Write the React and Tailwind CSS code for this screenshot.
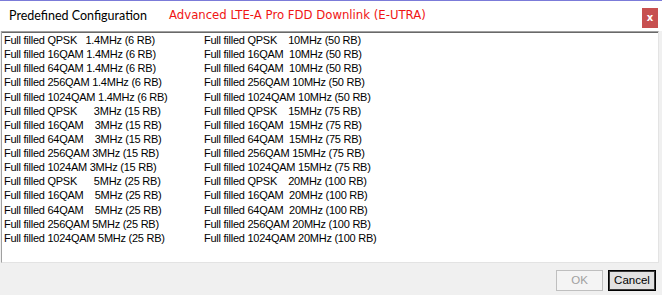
import React from 'react'

const left = [
    'Full filled QPSK   1.4MHz (6 RB)',
    'Full filled 16QAM 1.4MHz (6 RB)',
    'Full filled 64QAM 1.4MHz (6 RB)',
    'Full filled 256QAM 1.4MHz (6 RB)',
    'Full filled 1024QAM 1.4MHz (6 RB)',
    'Full filled QPSK      3MHz (15 RB)',
    'Full filled 16QAM    3MHz (15 RB)',
    'Full filled 64QAM    3MHz (15 RB)',
    'Full filled 256QAM 3MHz (15 RB)',
    'Full filled 1024AM 3MHz (15 RB)',
    'Full filled QPSK      5MHz (25 RB)',
    'Full filled 16QAM    5MHz (25 RB)',
    'Full filled 64QAM    5MHz (25 RB)',
    'Full filled 256QAM 5MHz (25 RB)',
    'Full filled 1024QAM 5MHz (25 RB)',
]

const right = [
    'Full filled QPSK    10MHz (50 RB)',
    'Full filled 16QAM  10MHz (50 RB)',
    'Full filled 64QAM  10MHz (50 RB)',
    'Full filled 256QAM 10MHz (50 RB)',
    'Full filled 1024QAM 10MHz (50 RB)',
    'Full filled QPSK    15MHz (75 RB)',
    'Full filled 16QAM  15MHz (75 RB)',
    'Full filled 64QAM  15MHz (75 RB)',
    'Full filled 256QAM 15MHz (75 RB)',
    'Full filled 1024QAM 15MHz (75 RB)',
    'Full filled QPSK    20MHz (100 RB)',
    'Full filled 16QAM  20MHz (100 RB)',
    'Full filled 64QAM  20MHz (100 RB)',
    'Full filled 256QAM 20MHz (100 RB)',
    'Full filled 1024QAM 20MHz (100 RB)',
]

const Column = ({ items }) => (
    <div className="flex flex-col w-[200px]">
        {items.map((t, i) => (
            <div key={i} className="h-[14.14px] leading-[14px] whitespace-pre">{t}</div>
        ))}
    </div>
)

const App = () => {
    return (
        <div className="w-[662px] h-[295px] flex flex-col bg-[#f0f0f0] border-t border-[#7b7bd9] overflow-hidden">
            {/* title bar */}
            <div className="h-[30px] bg-white flex items-center shrink-0">
                <span className="ml-[9px] w-[160px] text-[12.5px] text-black font-['Lato',sans-serif]">Predefined Configuration</span>
                <span className="text-[11.7px] text-[#f01414] font-['DejaVu_Sans',sans-serif]">Advanced LTE-A Pro FDD Downlink (E-UTRA)</span>
                <div className="ml-auto mr-[4px] mt-[3px] w-[16px] h-[20px] bg-[#c75050] flex items-center justify-center text-white text-[10px] font-bold font-['DejaVu_Sans',sans-serif] leading-none">x</div>
            </div>

            {/* list box */}
            <div className="ml-[1px] mr-[3px] h-[232px] bg-white border-t border-l border-[#a0a0a0] border-r border-b border-r-[#e3e3e3] border-b-[#e3e3e3] shrink-0">
                <div className="h-full border-t border-[#696969] flex pl-[2px] text-[11px] tracking-[-0.25px] text-black font-['Liberation_Sans',Arial,sans-serif]">
                    <Column items={left} />
                    <Column items={right} />
                </div>
            </div>

            {/* footer */}
            <div className="flex-1 flex items-start justify-end gap-[5px] pt-[7px] pr-[6px] font-['Liberation_Sans',Arial,sans-serif] text-[11.5px]">
                <button disabled className="w-[47px] h-[21px] border border-[#bfbfbf] bg-[#f4f4f4] text-[#a0a0a0] leading-none">OK</button>
                <button className="w-[48px] h-[21px] border border-black shadow-[inset_0_0_0_1px_#3a3a3a] bg-[#e1e1e1] text-black leading-none">Cancel</button>
            </div>
        </div>
    )
}

export default App
